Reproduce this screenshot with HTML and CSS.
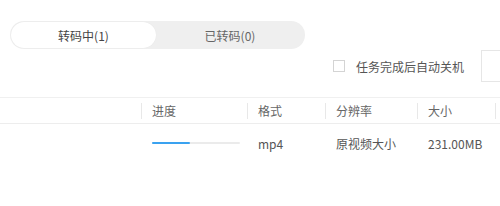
FILE: index.html
```html
<!DOCTYPE html>
<html lang="zh">
<head>
<meta charset="utf-8">
<link rel="stylesheet" href="styles.css">
</head>
<body>
<div class="page">
  <div class="top">
    <div class="tabs">
      <div class="tab active">转码中(1)</div>
      <div class="tab">已转码(0)</div>
    </div>
  </div>
  <div class="opts">
    <label class="check"><span class="box"></span><span>任务完成后自动关机</span></label>
    <div class="outbox"></div>
  </div>
  <div class="thead">
    <div class="c c-name"></div>
    <div class="c c-prog hc">进度</div>
    <div class="c c-fmt hc">格式</div>
    <div class="c c-res hc">分辨率</div>
    <div class="c c-size hc">大小</div>
    <div class="c c-rest hc"></div>
  </div>
  <div class="trow">
    <div class="c c-name"></div>
    <div class="c c-prog dc"><div class="bar"><div class="fill" style="width:38px"></div></div></div>
    <div class="c c-fmt dc">mp4</div>
    <div class="c c-res dc">原视频大小</div>
    <div class="c c-size dc">231.00MB</div>
    <div class="c c-rest"></div>
  </div>
</div>
</body>
</html>
```

FILE: styles.css
```css
html, body {
  margin: 0;
  padding: 0;
  background: #fff;
}
body {
  font-family: "Noto Sans CJK SC", "Microsoft YaHei", sans-serif;
  font-size: 12px;
  color: #555;
  overflow: hidden;
}
.page {
  width: 500px;
  height: 206px;
  overflow: hidden;
}
.top {
  padding: 21px 0 0 10px;
}
.tabs {
  display: flex;
  width: 295px;
  height: 28px;
  box-sizing: border-box;
  padding: 1px;
  border-radius: 14px;
  background: #efefef;
}
.tab {
  flex: 1;
  display: flex;
  align-items: center;
  justify-content: center;
  border-radius: 13px;
  color: #666;
  font-size: 12px;
}
.tab.active {
  flex: none;
  width: 145px;
  background: #fff;
  color: #444;
  box-shadow: 0 0 1px rgba(0,0,0,0.08);
}
.opts {
  display: flex;
  align-items: center;
  height: 32px;
  margin-top: 1px;
  padding-left: 333px;
}
.check {
  display: flex;
  align-items: center;
  color: #555;
  white-space: nowrap;
}
.box {
  width: 12px;
  height: 12px;
  box-sizing: border-box;
  border: 1px solid #d4d4d4;
  background: #fff;
  margin-right: 11px;
}
.outbox {
  flex: none;
  width: 60px;
  height: 32px;
  box-sizing: border-box;
  border: 1px solid #e6e6e6;
  margin-left: 17px;
}
.thead {
  display: flex;
  margin-top: 15px;
  height: 27px;
  box-sizing: border-box;
  border-top: 1px solid #f0f0f0;
  border-bottom: 1px solid #ededed;
}
.trow {
  display: flex;
  height: 38px;
}
.c {
  flex: none;
  display: flex;
  align-items: center;
  box-sizing: border-box;
  white-space: nowrap;
}
.c-name { width: 141px; }
.c-prog { width: 106px; }
.c-fmt { width: 78px; }
.c-res { width: 92px; }
.c-size { width: 78px; }
.c-rest { width: 40px; }
.hc {
  color: #666;
}
.hc::before {
  content: "";
  width: 1px;
  height: 16px;
  background: #e8e8e8;
  margin-right: 10px;
}
.dc {
  padding-left: 11px;
  color: #555;
  font-size: 12px;
}
.bar {
  width: 88px;
  height: 2px;
  background: #ebebeb;
  border-radius: 1px;
}
.fill {
  height: 2px;
  background: #3aa2f0;
  border-radius: 1px;
}
```
